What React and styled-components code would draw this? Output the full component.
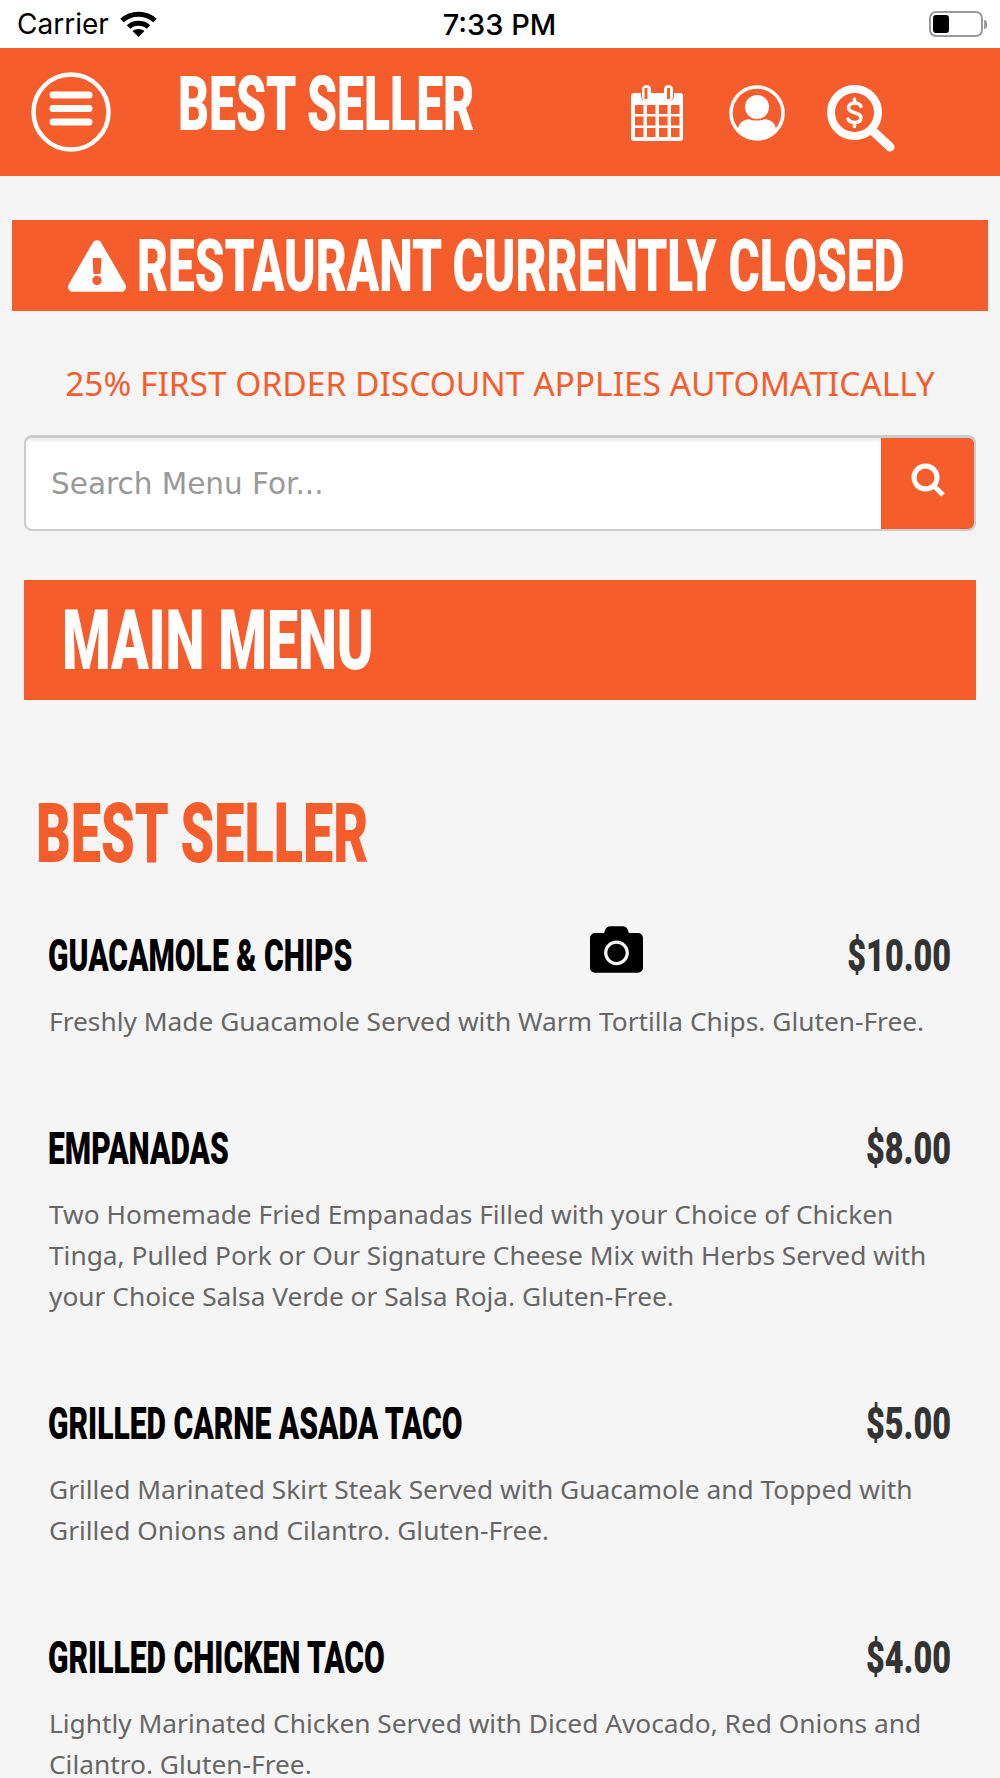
import React from "react";
import styled, { createGlobalStyle } from "styled-components";
import { FaCamera, FaExclamationTriangle } from "react-icons/fa";

const orange = "#f55e2c";
const heavy = `font-family: Roboto, "Liberation Sans", sans-serif; font-weight: 900; white-space: nowrap;`;
const bodyFont = `"Noto Sans", "Open Sans", sans-serif`;

const GlobalStyle = createGlobalStyle`
  html, body {
    margin: 0;
    padding: 0;
    background: #f5f5f5;
  }
  * {
    box-sizing: border-box;
  }
`;

const Page = styled.div`
  width: 1000px;
  height: 1778px;
  overflow: hidden;
  background: #f5f5f5;
`;

const StatusBar = styled.div`
  display: grid;
  grid-template-columns: 1fr auto 1fr;
  align-items: center;
  height: 48px;
  padding: 0 13px 0 17px;
  background: #fff;
  color: #000;
  font-family: Inter, sans-serif;
`;

const Carrier = styled.div`
  display: flex;
  align-items: center;
  gap: 11px;
  font-size: 28px;
`;

const Clock = styled.div`
  margin-left: -5px;
  font-size: 29px;
  font-weight: 500;
`;

const Battery = styled.div`
  justify-self: end;
  display: flex;
  align-items: center;
  gap: 1px;
`;

const BatteryCase = styled.div`
  width: 54px;
  height: 26px;
  padding: 2px;
  border: 2px solid #9a9a9a;
  border-radius: 7px;
`;

const BatteryLevel = styled.div`
  width: 16px;
  height: 18px;
  background: #000;
  border-radius: 3px;
`;

const BatteryTip = styled.div`
  width: 3px;
  height: 9px;
  background: #9a9a9a;
  border-radius: 0 3px 3px 0;
`;

const Header = styled.header`
  display: flex;
  align-items: center;
  height: 128px;
  padding-left: 31px;
  background: ${orange};
`;

const HeaderTitle = styled.h1`
  flex: none;
  width: 300px;
  margin: -16px 0 0 67px;
  color: #fff;
  ${heavy}
  font-size: 76px;
  line-height: 1;
  transform: scaleX(0.633);
  transform-origin: left center;
`;

const HeaderIcons = styled.div`
  display: flex;
  align-items: flex-start;
  gap: 42px;
  margin: 14px 0 0 153px;
`;

const Banner = styled.div`
  display: flex;
  align-items: center;
  gap: 11px;
  height: 91px;
  margin: 44px 12px 0;
  padding-left: 56px;
  background: ${orange};
  color: #fff;
`;

const BannerIcon = styled(FaExclamationTriangle)`
  flex: none;
  width: 58px;
  height: 60px;
`;

const BannerText = styled.div`
  min-width: 0;
  ${heavy}
  font-size: 73px;
  transform: scaleX(0.653);
  transform-origin: left center;
`;

const Discount = styled.p`
  margin: 50px 0 0;
  color: ${orange};
  font-family: ${bodyFont};
  font-size: 33.5px;
  line-height: 44px;
  text-align: center;
  white-space: nowrap;
`;

const SearchBar = styled.div`
  display: flex;
  height: 96px;
  margin: 30px 24px 0;
  border: 2px solid #ccc;
  border-top-width: 3px;
  border-radius: 8px;
  overflow: hidden;
  background: #fff;
`;

const SearchPlaceholder = styled.div`
  flex: 1;
  display: flex;
  align-items: center;
  padding-left: 25px;
  box-shadow: inset 0 3px 3px rgba(0, 0, 0, 0.07);
  color: #999;
  font-family: "DejaVu Sans", sans-serif;
  font-size: 29.5px;
`;

const SearchButton = styled.div`
  display: flex;
  align-items: center;
  justify-content: center;
  width: 93px;
  padding-bottom: 8px;
  background: ${orange};
`;

const MenuBar = styled.div`
  display: flex;
  align-items: center;
  height: 120px;
  margin: 49px 24px 0;
  padding-left: 38px;
  background: ${orange};
`;

const MenuBarText = styled.div`
  color: #fff;
  ${heavy}
  font-size: 84px;
  transform: scaleX(0.66);
  transform-origin: left center;
`;

const SectionTitle = styled.h2`
  margin: 89px 0 0 36px;
  color: ${orange};
  ${heavy}
  font-size: 84px;
  line-height: 90px;
  transform: scaleX(0.642);
  transform-origin: left center;
`;

const ItemList = styled.div`
  display: flex;
  flex-direction: column;
  gap: 79px;
  margin-top: 49px;
  padding: 0 49px;
`;

const ItemRow = styled.div`
  display: grid;
  grid-template-columns: 541px 53px 1fr;
  align-items: center;
  height: 50px;
`;

const ItemName = styled.div`
  grid-column: 1;
  margin: 1px 0 0 -1px;
  color: #000;
  ${heavy}
  font-size: 45px;
  transform: scaleX(0.668);
  transform-origin: left center;
`;

const CameraIcon = styled(FaCamera)`
  grid-column: 2;
  width: 53px;
  height: 53px;
  margin-top: -12px;
  color: #000;
`;

const ItemPrice = styled.div`
  grid-column: 3;
  justify-self: end;
  margin-top: 1px;
  color: #333;
  ${heavy}
  font-size: 45px;
  transform: scaleX(0.72);
  transform-origin: right center;
`;

const ItemDesc = styled.p`
  margin: 23px 0 0;
  color: #666;
  font-family: ${bodyFont};
  font-size: 26.3px;
  line-height: 41px;
`;

const WifiIcon = () => (
  <svg width="37" height="26" viewBox="0 0 37 26" fill="none" stroke="#000" strokeWidth="5">
    <path d="M2 9.500C11 1 26 1 35 9.500" />
    <path d="M8.500 16C14 11 23 11 28.500 16" />
    <path d="M18.500 26l-6-6c3.300-2.800 8.700-2.800 12 0z" fill="#000" stroke="none" />
  </svg>
);

const MenuIcon = () => (
  <svg width="80" height="80" viewBox="0 0 80 80" fill="none" stroke="#fff">
    <circle cx="40" cy="40" r="37.500" strokeWidth="4.500" />
    <path d="M22 23h36M22 36.500h36M22 50h36" strokeWidth="7" strokeLinecap="round" />
  </svg>
);

const CalendarIcon = () => (
  <svg width="56" height="56" viewBox="0 0 56 56" fill="#fff">
    <path d="M3 8h46a3 3 0 0 1 3 3v42a3 3 0 0 1-3 3H3a3 3 0 0 1-3-3V11a3 3 0 0 1 3-3z" />
    <rect x="10" y="0" width="10" height="16" rx="5" fill={orange} />
    <rect x="33" y="0" width="10" height="16" rx="5" fill={orange} />
    <rect x="11" y="0" width="9" height="16" rx="4.500" />
    <rect x="33" y="0" width="9" height="16" rx="4.500" />
    <rect x="13.500" y="3" width="3" height="11" fill={orange} />
    <rect x="36" y="3" width="3" height="11" fill={orange} />
    <g fill={orange}>
      {[20, 31.500, 43].map((y) =>
        [4, 16, 28, 40].map((x) => <rect key={`${x}-${y}`} x={x} y={y} width="8.500" height="9" />)
      )}
    </g>
  </svg>
);

const UserIcon = () => (
  <svg width="56" height="56" viewBox="0 0 56 56" fill="#fff">
    <circle cx="28" cy="28" r="26" fill="none" stroke="#fff" strokeWidth="3.500" />
    <circle cx="28" cy="22" r="12" />
    <path d="M9 44c1-7 6-9 11-10 3 2 13 2 16 0 5 1 10 3 11 10-4.500 5-11 9-19 9s-14.500-4-19-9z" />
  </svg>
);

const DollarSearchIcon = () => (
  <svg width="68" height="68" viewBox="0 0 68 68" fill="none">
    <circle cx="27.500" cy="27.500" r="23.500" stroke="#fff" strokeWidth="8" />
    <path d="M47 47l16 15" stroke="#fff" strokeWidth="9" strokeLinecap="round" />
    <path
      d="M34 21.500c-1-2.500-3.500-3.500-6.500-3.500-3.500 0-6 2-6 4.800 0 6.500 12.500 3.500 12.500 10 0 3-2.700 4.700-6.500 4.700-3 0-5.500-1.200-6.500-3.500M27.500 14v4M27.500 37.500v4"
      stroke="#fff"
      strokeWidth="3.500"
      strokeLinecap="round"
    />
  </svg>
);

const SearchIcon = () => (
  <svg width="34" height="34" viewBox="0 0 34 34" fill="none" stroke="#fff">
    <circle cx="14.500" cy="14.500" r="11.500" strokeWidth="5" />
    <path d="M23 23l9 9" strokeWidth="5" />
  </svg>
);

const items = [
  {
    name: "GUACAMOLE & CHIPS",
    price: "$10.00",
    photo: true,
    desc: "Freshly Made Guacamole Served with Warm Tortilla Chips. Gluten-Free.",
  },
  {
    name: "EMPANADAS",
    price: "$8.00",
    desc: "Two Homemade Fried Empanadas Filled with your Choice of Chicken Tinga, Pulled Pork or Our Signature Cheese Mix with Herbs Served with your Choice Salsa Verde or Salsa Roja. Gluten-Free.",
  },
  {
    name: "GRILLED CARNE ASADA TACO",
    price: "$5.00",
    desc: "Grilled Marinated Skirt Steak Served with Guacamole and Topped with Grilled Onions and Cilantro. Gluten-Free.",
  },
  {
    name: "GRILLED CHICKEN TACO",
    price: "$4.00",
    desc: "Lightly Marinated Chicken Served with Diced Avocado, Red Onions and Cilantro. Gluten-Free.",
  },
];

const App = () => {
  return (
    <Page>
      <GlobalStyle />
      <StatusBar>
        <Carrier>
          Carrier
          <WifiIcon />
        </Carrier>
        <Clock>7:33 PM</Clock>
        <Battery>
          <BatteryCase>
            <BatteryLevel />
          </BatteryCase>
          <BatteryTip />
        </Battery>
      </StatusBar>

      <Header>
        <MenuIcon />
        <HeaderTitle>BEST SELLER</HeaderTitle>
        <HeaderIcons>
          <CalendarIcon />
          <UserIcon />
          <DollarSearchIcon />
        </HeaderIcons>
      </Header>

      <Banner>
        <BannerIcon />
        <BannerText>RESTAURANT CURRENTLY CLOSED</BannerText>
      </Banner>

      <Discount>25% FIRST ORDER DISCOUNT APPLIES AUTOMATICALLY</Discount>

      <SearchBar>
        <SearchPlaceholder>Search Menu For...</SearchPlaceholder>
        <SearchButton>
          <SearchIcon />
        </SearchButton>
      </SearchBar>

      <MenuBar>
        <MenuBarText>MAIN MENU</MenuBarText>
      </MenuBar>

      <SectionTitle>BEST SELLER</SectionTitle>

      <ItemList>
        {items.map((item) => (
          <div key={item.name}>
            <ItemRow>
              <ItemName>{item.name}</ItemName>
              {item.photo && <CameraIcon />}
              <ItemPrice>{item.price}</ItemPrice>
            </ItemRow>
            <ItemDesc>{item.desc}</ItemDesc>
          </div>
        ))}
      </ItemList>
    </Page>
  );
};

export default App;
